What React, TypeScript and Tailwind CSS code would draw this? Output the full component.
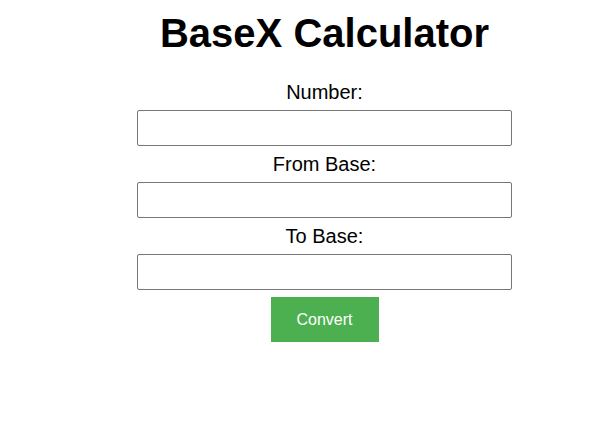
export default function App() {
  const fields = ["Number:", "From Base:", "To Base:"]

  return (
    <div className="min-h-screen bg-white pl-[44px] font-['Liberation_Sans',Arial,sans-serif] text-black">
      <div className="flex flex-col items-center">
        <h1 className="mt-[10px] mb-[25px] text-[40px] font-bold leading-[46px]">BaseX Calculator</h1>
        {fields.map((label) => (
          <div key={label} className="flex flex-col items-center">
            <label className="mb-[6px] text-[20px] leading-[23px]">{label}</label>
            <input
              type="text"
              className="mb-[7px] h-[36px] w-[375px] rounded-[2px] border border-[#767676] bg-white px-2 text-[16px] outline-none"
            />
          </div>
        ))}
        <button className="h-[45px] w-[108px] bg-[#4CAF50] text-[16px] text-white">Convert</button>
      </div>
    </div>
  )
}
